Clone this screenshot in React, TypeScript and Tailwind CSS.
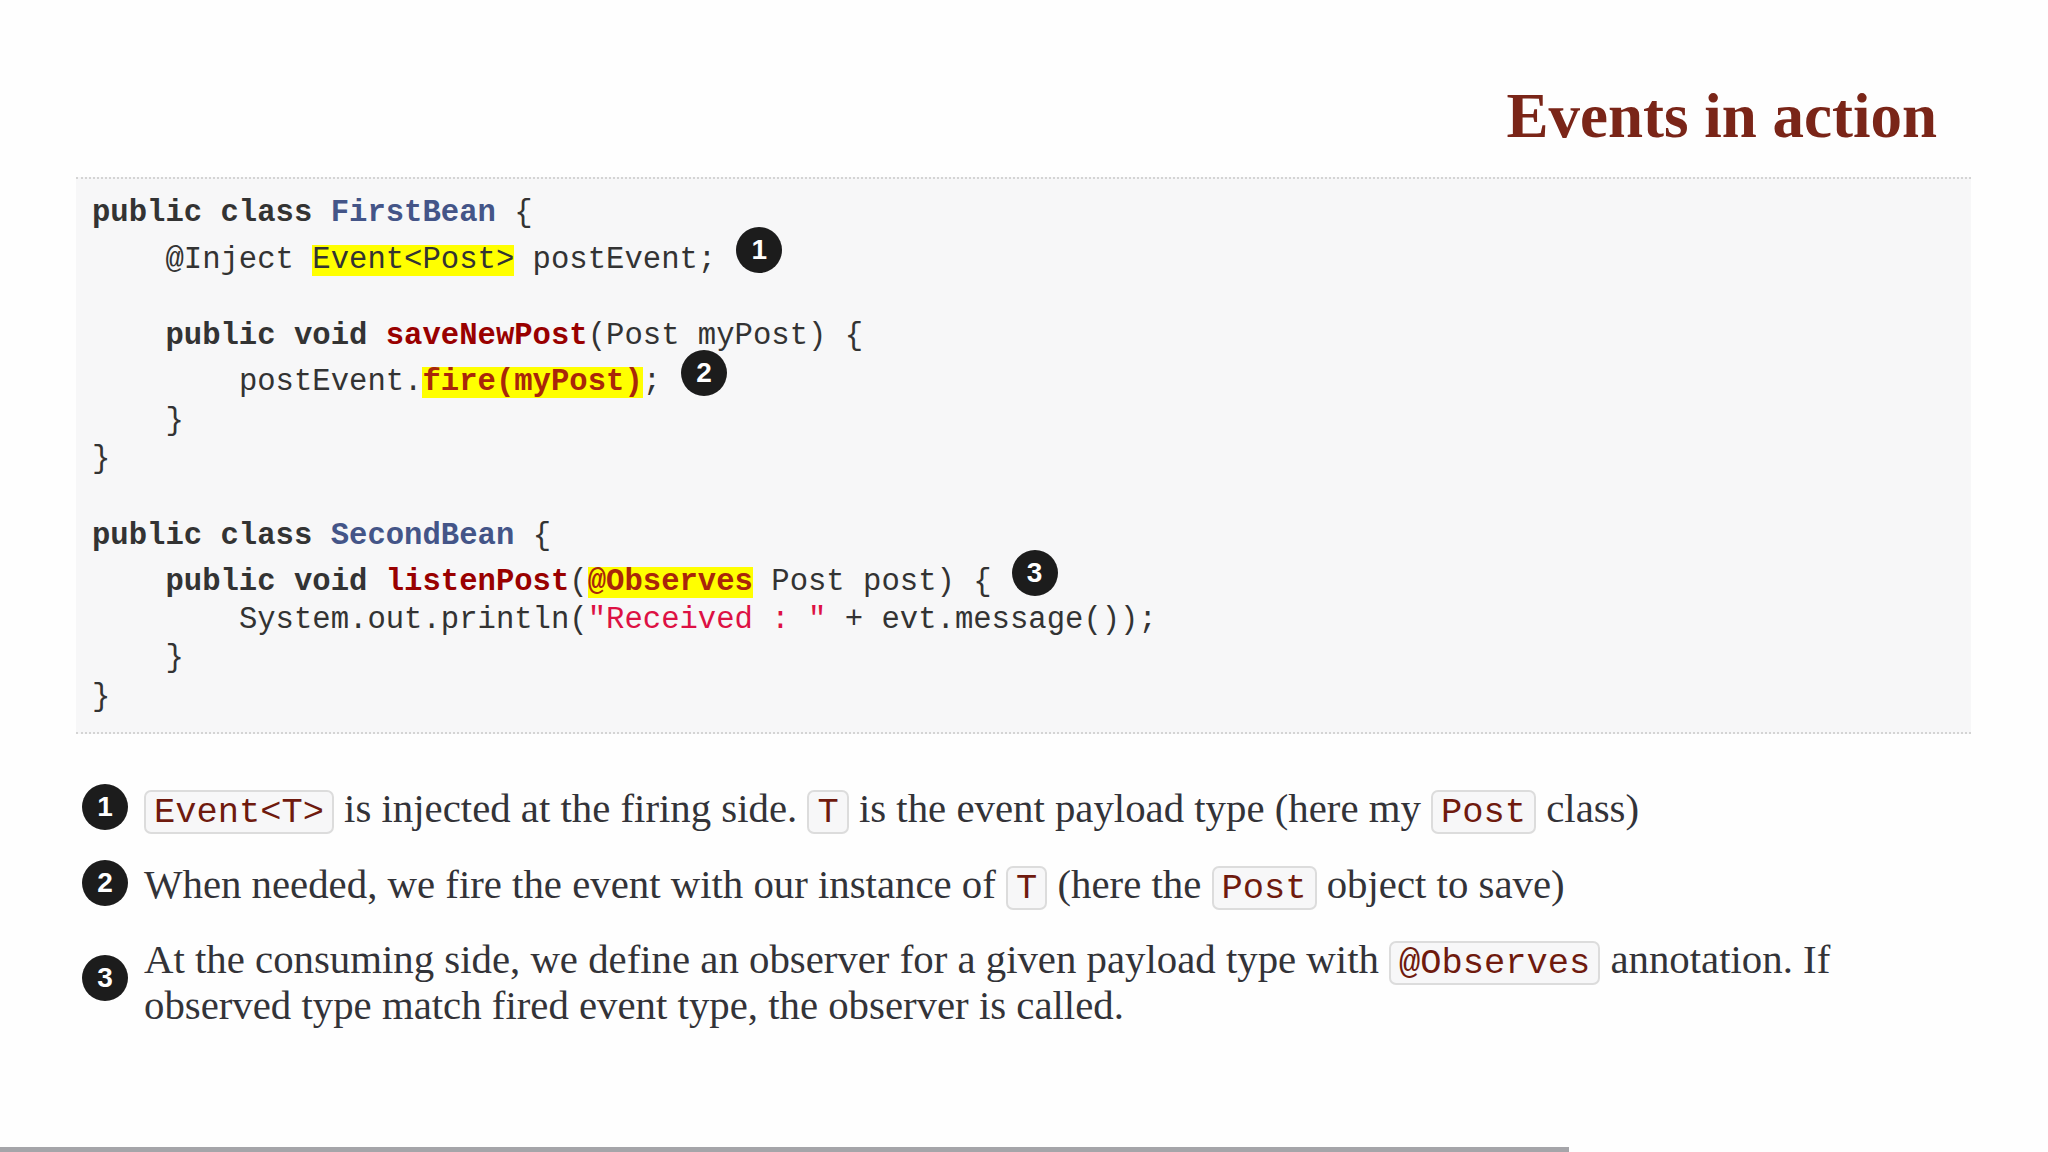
import type { ReactNode } from 'react';

const Badge = ({ n, className = '' }: { n: number; className?: string }) => (
  <span
    className={`inline-flex w-[46px] h-[46px] shrink-0 items-center justify-center rounded-full bg-[#1c1c1c] text-white text-[28px] font-bold font-['Liberation_Sans',sans-serif] ${className}`}
  >
    {n}
  </span>
);

const Kw = ({ children }: { children: ReactNode }) => <span className="font-bold text-[#333333]">{children}</span>;
const Cls = ({ children }: { children: ReactNode }) => <span className="font-bold text-[#445588]">{children}</span>;
const Fn = ({ children }: { children: ReactNode }) => <span className="font-bold text-[#990000]">{children}</span>;
const Str = ({ children }: { children: ReactNode }) => <span className="text-[#dd1144]">{children}</span>;
const Mark = ({ children }: { children: ReactNode }) => (
  <span className="inline-block h-[31px] leading-[31px] align-baseline bg-[#ffff00]">{children}</span>
);

const Line = ({ children, badge }: { children?: ReactNode; badge?: number }) => (
  <div className={badge ? 'flex items-center h-[46.3px] pt-[8px]' : 'flex items-center h-[38.3px]'}>
    <span className="whitespace-pre">{children}</span>
    {badge && <Badge n={badge} className="ml-[20px] -mt-[20px]" />}
  </div>
);

const Code = ({ children }: { children: ReactNode }) => (
  <code className="inline-block h-[44px] px-[8px] -mb-[2px] align-baseline rounded-[7px] border-2 border-[#dcdcdc] bg-[#f7f7f8] text-[#6f1a0e] font-['Liberation_Mono',monospace] text-[35.4px] leading-[43px]">
    {children}
  </code>
);

export default function App() {
  return (
    <div className="relative h-[1152px] overflow-hidden bg-[#fefefe] pt-[80px] pl-[76px] pr-[77px] font-['Liberation_Serif',serif]">
      <h1 className="pr-[34px] h-[97px] text-right text-[63px] leading-[72px] font-bold text-[#7a2518]">Events in action</h1>

      <div className="h-[557px] border-y-2 border-dotted border-[#d4d4d4] bg-[#f7f7f8] pt-[16px] pl-[16px] font-['Liberation_Mono',monospace] text-[30.6px] text-[#333333]">
        <Line>
          <Kw>public class</Kw> <Cls>FirstBean</Cls> {'{'}
        </Line>
        <Line badge={1}>
          {'    '}@Inject <Mark>Event&lt;Post&gt;</Mark> postEvent;
        </Line>
        <Line />
        <Line>
          {'    '}<Kw>public void</Kw> <Fn>saveNewPost</Fn>(Post myPost) {'{'}
        </Line>
        <Line badge={2}>
          {'        '}postEvent.<Mark><span className="font-bold text-[#a8260a]">fire(myPost)</span></Mark>;
        </Line>
        <Line>{'    }'}</Line>
        <Line>{'}'}</Line>
        <Line />
        <Line>
          <Kw>public class</Kw> <Cls>SecondBean</Cls> {'{'}
        </Line>
        <Line badge={3}>
          {'    '}<Kw>public void</Kw> <Fn>listenPost</Fn>(<Mark><span className="font-bold text-[#a8260a]">@Observes</span></Mark> Post post) {'{'}
        </Line>
        <Line>
          {'        '}System.out.println(<Str>"Received : "</Str> + evt.message());
        </Line>
        <Line>{'    }'}</Line>
        <Line>{'}'}</Line>
      </div>

      <div className="mt-[52px] pl-[6px] flex flex-col gap-[30px] text-[40.8px] leading-[46px] text-[#333338]">
        <div className="flex items-center gap-[16px]">
          <Badge n={1} className="-mt-[4px]" />
          <p>
            <Code>Event&lt;T&gt;</Code> is injected at the firing side. <Code>T</Code> is the event payload type (here my <Code>Post</Code> class)
          </p>
        </div>
        <div className="flex items-center gap-[16px]">
          <Badge n={2} className="-mt-[4px]" />
          <p>
            When needed, we fire the event with our instance of <Code>T</Code> (here the <Code>Post</Code> object to save)
          </p>
        </div>
        <div className="flex items-center gap-[16px] -mt-[1px]">
          <Badge n={3} className="-mt-[10px]" />
          <p>
            At the consuming side, we define an observer for a given payload type with <Code>@Observes</Code> annotation. If
            <br />
            observed type match fired event type, the observer is called.
          </p>
        </div>
      </div>

      <div className="absolute bottom-0 left-0 h-[5px] w-[1569px] bg-[#a5a5a9]" />
    </div>
  );
}
